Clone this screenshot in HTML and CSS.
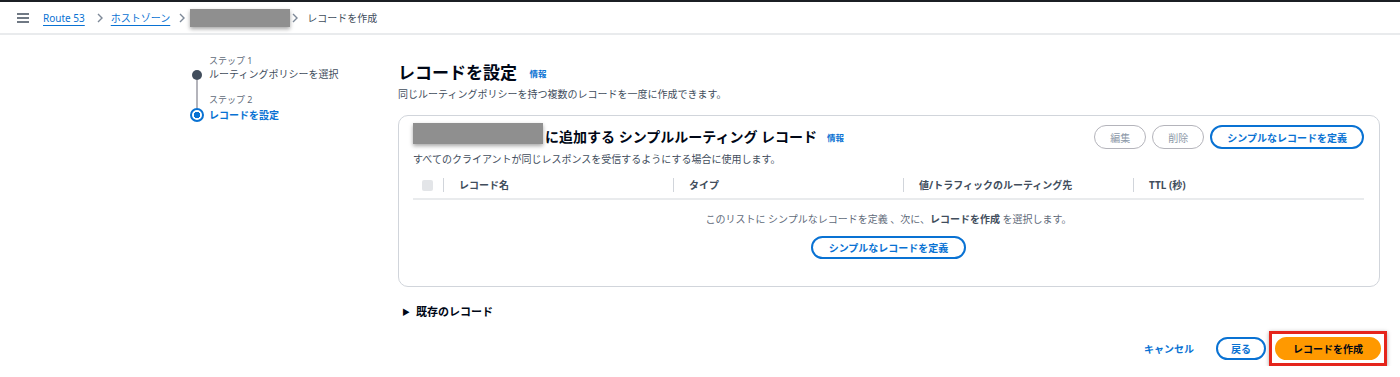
FILE: index.html
```html
<!DOCTYPE html>
<html lang="ja">
<head>
  <meta charset="UTF-8">
  <meta name="viewport" content="width=device-width, initial-scale=1.0">
  <title>レコードを作成 | Route 53</title>
  <link rel="stylesheet" href="styles.css">
</head>
<body>
  <header class="topbar">
    <svg class="menu" width="12" height="10" viewBox="0 0 12 10">
      <path d="M0 1h12M0 5h12M0 9h12" stroke="#414d5c" stroke-width="1.6"/>
    </svg>
    <nav class="crumbs">
      <a href="#">Route 53</a>
      <svg class="chev" width="6" height="10" viewBox="0 0 6 10"><path d="M1 1l4 4-4 4" fill="none" stroke="#7d8998" stroke-width="1.4"/></svg>
      <a href="#">ホストゾーン</a>
      <svg class="chev" width="6" height="10" viewBox="0 0 6 10"><path d="M1 1l4 4-4 4" fill="none" stroke="#7d8998" stroke-width="1.4"/></svg>
      <span class="redact crumb-redact"></span>
      <svg class="chev" width="6" height="10" viewBox="0 0 6 10"><path d="M1 1l4 4-4 4" fill="none" stroke="#7d8998" stroke-width="1.4"/></svg>
      <span class="current">レコードを作成</span>
    </nav>
  </header>

  <div class="page">
    <ol class="steps">
      <li class="step-label first">ステップ 1</li>
      <li class="step-dot first"><span class="dot"></span></li>
      <li class="step-text first">ルーティングポリシーを選択</li>
      <li class="step-line"><span class="line"></span></li>
      <li class="step-label second">ステップ 2</li>
      <li class="step-dot second"><span class="ring"></span></li>
      <li class="step-text second active">レコードを設定</li>
    </ol>

    <main class="main">
      <h1>レコードを設定 <a class="info" href="#">情報</a></h1>
      <p class="desc">同じルーティングポリシーを持つ複数のレコードを一度に作成できます。</p>

      <section class="card">
        <div class="card-head">
          <div class="card-title">
            <span class="redact title-redact"></span>
            <h2>に追加する シンプルルーティング レコード</h2>
            <a class="info" href="#">情報</a>
          </div>
          <div class="actions">
            <button class="btn disabled">編集</button>
            <button class="btn disabled">削除</button>
            <button class="btn">シンプルなレコードを定義</button>
          </div>
        </div>
        <p class="sub">すべてのクライアントが同じレスポンスを受信するようにする場合に使用します。</p>

        <div class="thead">
          <div class="col-check"><span class="checkbox"></span></div>
          <div class="col">レコード名</div>
          <div class="col">タイプ</div>
          <div class="col">値/トラフィックのルーティング先</div>
          <div class="col">TTL (秒)</div>
        </div>

        <div class="empty">
          <p>このリストに シンプルなレコードを定義 、次に、<b>レコードを作成</b> を選択します。</p>
          <button class="btn">シンプルなレコードを定義</button>
        </div>
      </section>

      <div class="existing"><span class="caret">&#9654;</span>既存のレコード</div>

      <div class="footer">
        <a class="cancel" href="#">キャンセル</a>
        <button class="btn">戻る</button>
        <div class="highlight"><button class="btn primary">レコードを作成</button></div>
      </div>
    </main>
  </div>
</body>
</html>
```

FILE: styles.css
```css
body {
  margin: 0;
  font-family: "Noto Sans", "Noto Sans CJK JP", sans-serif;
  font-size: 10px;
  color: #000716;
  background-color: #fff;
}

a {
  color: #0972d3;
}

.topbar {
  display: flex;
  align-items: center;
  height: 31px;
  padding-left: 17px;
  border-top: 2px solid #1b1f24;
  border-bottom: 2px solid #e9ebed;
}

.crumbs {
  display: flex;
  align-items: center;
  margin-left: 14px;
  font-size: 10px;
}

.crumbs a {
  text-decoration: underline;
  text-underline-offset: 3px;
}

.chev {
  margin: 0 8px 0 12px;
}

.crumbs .chev:nth-of-type(2) {
  margin: 0 5px 0 9px;
}

.crumbs .chev:nth-of-type(3) {
  margin: 0 9px 0 2px;
}

.current {
  color: #414d5c;
}

.redact {
  display: inline-block;
  background-color: #8f8f8f;
  box-shadow: 0 2px 4px rgba(0, 0, 0, 0.35);
}

.crumb-redact {
  width: 100px;
  height: 18px;
}

.page {
  display: flex;
  padding-right: 20px;
}

/* step list on the left */
.steps {
  display: grid;
  grid-template-columns: 14px 1fr;
  column-gap: 5px;
  align-content: start;
  flex-shrink: 0;
  width: 398px;
  box-sizing: border-box;
  margin: 0;
  padding: 20px 0 0 190px;
  list-style: none;
}

.step-label {
  grid-column: 2;
  font-size: 9px;
  line-height: 12px;
  color: #5f6b7a;
}

.step-label.first { grid-row: 1; }
.step-label.second { grid-row: 3; margin-top: 13px; }

.step-dot {
  grid-column: 1;
  display: flex;
  align-items: center;
  justify-content: center;
}

.step-dot.first { grid-row: 2; }
.step-dot.second { grid-row: 4; margin-top: 2px; }

.step-text {
  grid-column: 2;
  font-size: 10px;
  line-height: 14px;
  color: #414d5c;
  white-space: nowrap;
}

.step-text.first { grid-row: 2; }
.step-text.second { grid-row: 4; margin-top: 2px; }

.step-text.active {
  color: #0972d3;
  font-weight: bold;
}

.step-line {
  grid-column: 1;
  grid-row: 3;
  display: flex;
  justify-content: center;
  margin: -1px 0 -2px;
}

.line {
  width: 2px;
  background-color: #b4b4bb;
}

.dot {
  width: 10px;
  height: 10px;
  border-radius: 50%;
  background-color: #414d5c;
  margin-top: 2px;
}

.ring {
  width: 10px;
  height: 10px;
  border-radius: 50%;
  border: 2px solid #0972d3;
  background: radial-gradient(circle, #0972d3 0 3px, #fff 3.5px);
}

.main {
  flex: 1;
  padding-top: 27px;
}

h1 {
  margin: 0;
  font-size: 17px;
  line-height: 22px;
  font-weight: bold;
}

.info {
  font-size: 8.5px;
  font-weight: bold;
  text-decoration: none;
  margin-left: 8px;
  vertical-align: 2px;
}

.desc {
  margin: 2px 0 14px;
  line-height: 14px;
  color: #414d5c;
}

.card {
  border: 1px solid #d1d5db;
  border-radius: 10px;
  padding: 7px 15px 27px 14px;
}

.card-head {
  display: flex;
  justify-content: space-between;
  align-items: flex-start;
}

.card-title {
  display: flex;
  align-items: center;
  height: 28px;
}

.title-redact {
  width: 130px;
  height: 21px;
  align-self: flex-start;
  margin-right: 2px;
}

.card-title h2 {
  margin: 0;
  font-size: 14px;
  font-weight: bold;
  line-height: 20px;
}

.card-title .info {
  margin-left: 10px;
  vertical-align: 0;
}

.actions {
  display: flex;
  gap: 6px;
  padding-top: 2px;
}

.btn {
  height: 24px;
  padding: 0 15px;
  border: 2px solid #0972d3;
  border-radius: 12px;
  background-color: #fff;
  color: #0972d3;
  font-family: inherit;
  font-size: 10px;
  font-weight: bold;
  cursor: pointer;
}

.btn.disabled {
  border: 1.5px solid #b4b4bb;
  color: #8d99a8;
  font-weight: normal;
  padding: 0 15px;
}

.sub {
  margin: 1px 0 0;
  line-height: 14px;
  color: #414d5c;
}

.thead {
  display: flex;
  align-items: center;
  height: 26px;
  margin-top: 6px;
  border-bottom: 2px solid #e9ebed;
  font-weight: bold;
  color: #414d5c;
}

.col-check {
  width: 30px;
  display: flex;
  align-items: center;
  padding-left: 9px;
  box-sizing: border-box;
  height: 14px;
}

.checkbox {
  width: 11px;
  height: 11px;
  border-radius: 2px;
  background-color: #e3e5e8;
}

.col {
  width: 230px;
  box-sizing: border-box;
  padding-left: 15px;
  border-left: 1px solid #d1d5db;
  line-height: 14px;
}

.empty {
  display: flex;
  flex-direction: column;
  align-items: center;
  padding-top: 12px;
}

.empty p {
  margin: 0 0 10px;
  line-height: 14px;
  color: #5f6b7a;
}

.empty b {
  color: #414d5c;
}

.empty .btn {
  height: 23px;
  padding: 0 16px;
}

.existing {
  margin-top: 18px;
  padding-left: 4px;
  font-size: 11px;
  font-weight: bold;
  line-height: 14px;
  color: #000716;
}

.caret {
  font-size: 8px;
  margin-right: 6px;
  vertical-align: 1px;
}

.footer {
  display: flex;
  justify-content: flex-end;
  align-items: center;
  margin-top: 12px;
  margin-right: -7px;
}

.cancel {
  font-weight: bold;
  text-decoration: none;
  margin-right: 22px;
}

.footer .btn {
  height: 23px;
  padding: 0 13px;
}

/* red annotation box around the submit button */
.highlight {
  display: flex;
  align-items: center;
  margin-left: 3px;
  padding: 3px;
  border: 3px solid #e5251c;
  box-shadow: 0 1px 4px rgba(0, 0, 0, 0.35);
}

.footer .btn.primary {
  padding: 0 16px;
  background-color: #ff9900;
  border-color: #ff9900;
  color: #000716;
}
```
